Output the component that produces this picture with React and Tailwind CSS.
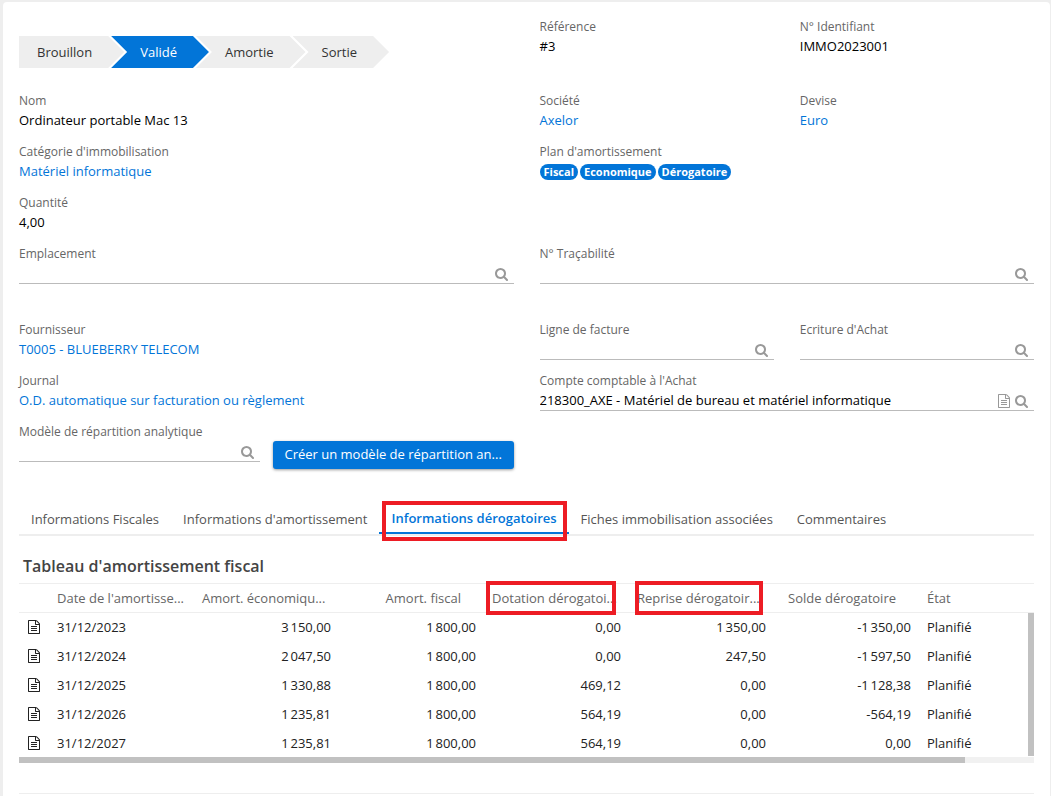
import React, { useState } from 'react';
import clsx from 'clsx';

const steps = ['Brouillon', 'Validé', 'Amortie', 'Sortie'];

const tabs = [
    'Informations Fiscales',
    "Informations d'amortissement",
    'Informations dérogatoires',
    'Fiches immobilisation associées',
    'Commentaires'
];

const columns = [
    { label: "Date de l'amortisse..." },
    { label: 'Amort. économiqu...' },
    { label: 'Amort. fiscal', right: true },
    { label: 'Dotation dérogatoi...', mark: 'left-[2px] right-[13px]' },
    { label: 'Reprise dérogatoir...', mark: 'left-[6px] right-[11px]' },
    { label: 'Solde dérogatoire', right: true },
    { label: 'État' }
];

const rows = [
    ['31/12/2023', 3150, 1800, 0, 1350, -1350, 'Planifié'],
    ['31/12/2024', 2047.5, 1800, 0, 247.5, -1597.5, 'Planifié'],
    ['31/12/2025', 1330.88, 1800, 469.12, 0, -1128.38, 'Planifié'],
    ['31/12/2026', 1235.81, 1800, 564.19, 0, -564.19, 'Planifié'],
    ['31/12/2027', 1235.81, 1800, 564.19, 0, 0, 'Planifié']
];

const formatAmount = (value) => {
    const [int, dec] = value.toFixed(2).split('.');
    return `${int.replace(/\B(?=(\d{3})+$)/g, '\u202f')},${dec}`;
};

function SearchIcon() {
    return (
        <svg viewBox="0 0 1792 1792" className="size-3.5 fill-current" aria-hidden="true">
            <path d="M1152 832q0-185-131.5-316.5t-316.5-131.5-316.5 131.5-131.5 316.5 131.5 316.5 316.5 131.5 316.5-131.5 131.5-316.5zm512 832q0 52-38 90t-90 38q-54 0-90-38l-343-342q-179 124-399 124-143 0-273.5-55.5t-225-150-150-225-55.5-273.5 55.5-273.5 150-225 225-150 273.5-55.5 273.5 55.5 225 150 150 225 55.5 273.5q0 220-124 399l343 343q37 37 37 90z" />
        </svg>
    );
}

function FileIcon() {
    return (
        <svg viewBox="0 0 1792 1792" className="size-3.5 fill-current" aria-hidden="true">
            <path d="M1596 380q28 28 48 76t20 88v1152q0 40-28 68t-68 28h-1344q-40 0-68-28t-28-68v-1600q0-40 28-68t68-28h896q40 0 88 20t76 48zm-444-244v376h376q-10-29-22-41l-313-313q-12-12-41-22zm384 1528v-1024h-416q-40 0-68-28t-28-68v-416h-768v1536h1280zm-1024-864q0-14 9-23t23-9h704q14 0 23 9t9 23v64q0 14-9 23t-23 9h-704q-14 0-23-9t-9-23v-64zm736 224q14 0 23 9t9 23v64q0 14-9 23t-23 9h-704q-14 0-23-9t-9-23v-64q0-14 9-23t23-9h704zm0 256q14 0 23 9t9 23v64q0 14-9 23t-23 9h-704q-14 0-23-9t-9-23v-64q0-14 9-23t23-9h704z" />
        </svg>
    );
}

function Field({ label, className, children }) {
    return (
        <div className={className}>
            <div className="h-5 text-xs leading-[22px] text-[#666]">{label}</div>
            <div className="h-[21px] leading-[21px] text-black">{children}</div>
        </div>
    );
}

function LinkField({ label, value, className }) {
    return (
        <Field label={label} className={className}>
            <a href="#" className="text-[#0275d8] hover:underline">{value}</a>
        </Field>
    );
}

function LookupField({ id, label, value = '', className }) {
    return (
        <div className={className}>
            <label htmlFor={id} className="block h-5 text-xs leading-[22px] text-[#666]">{label}</label>
            <div className="flex h-[21px] items-end border-b border-[#bbb] pr-[5px] text-[#999]">
                <input
                    id={id}
                    type="text"
                    defaultValue={value}
                    className="h-5 min-w-0 flex-1 bg-transparent text-black outline-none"
                />
                {value && (
                    <button type="button" aria-label="Ouvrir" className="mr-1 pb-0.5">
                        <FileIcon />
                    </button>
                )}
                <button type="button" aria-label="Rechercher" className="pb-0.5">
                    <SearchIcon />
                </button>
            </div>
        </div>
    );
}

function StatusSteps({ current }) {
    return (
        <div className="flex pt-5">
            {steps.map((step, i) => (
                <button
                    key={step}
                    type="button"
                    className={clsx(
                        'h-8 pr-8',
                        i === 0
                            ? 'pl-[18px] [clip-path:polygon(0_0,calc(100%-16px)_0,100%_50%,calc(100%-16px)_100%,0_100%)]'
                            : '-ml-[13px] pl-[29px] [clip-path:polygon(0_0,calc(100%-16px)_0,100%_50%,calc(100%-16px)_100%,0_100%,16px_50%)]',
                        step === current ? 'bg-[#0275d8] text-white' : 'bg-[#eee] text-[#333]'
                    )}
                >
                    {step}
                </button>
            ))}
        </div>
    );
}

function Tabs({ active, onChange }) {
    return (
        <div role="tablist" className="mt-8 flex border-b-2 border-[#eee] pt-[3px]">
            {tabs.map((tab) => (
                <button
                    key={tab}
                    type="button"
                    role="tab"
                    aria-selected={tab === active}
                    onClick={() => onChange(tab)}
                    className={clsx(
                        'relative h-[30px] px-3 whitespace-nowrap',
                        tab === active ? 'border-b-2 border-[#0275d8] font-semibold text-[#0275d8]' : 'text-[#555]'
                    )}
                >
                    {tab}
                    {tab === 'Informations dérogatoires' && (
                        <span className="pointer-events-none absolute -top-[3px] -bottom-[9px] left-[3px] right-0.5 border-4 border-[#ed1c24]" />
                    )}
                </button>
            ))}
        </div>
    );
}

function DepreciationTable() {
    return (
        <div>
            <h2 className="px-1 pt-[18px] pb-[5px] text-base leading-6 font-semibold text-[#444]">
                Tableau d'amortissement fiscal
            </h2>
            <div className="relative border-t border-[#eee]">
                <table className="w-full table-fixed">
                    <colgroup>
                        <col className="w-[30px]" />
                        {columns.map(({ label }) => (
                            <col key={label} className={label === 'État' ? '' : 'w-[145px]'} />
                        ))}
                    </colgroup>
                    <thead>
                        <tr className="h-7 border-b border-[#eee] text-[#666]">
                            <th />
                            {columns.map(({ label, right, mark }) => (
                                <th key={label} className="relative p-0 px-2 text-left font-normal whitespace-nowrap">
                                    <div className={clsx(right && 'pr-[15px] text-right')}>{label}</div>
                                    {mark && (
                                        <span className={clsx('pointer-events-none absolute -top-[3px] -bottom-[3px] border-4 border-[#ed1c24]', mark)} />
                                    )}
                                </th>
                            ))}
                        </tr>
                    </thead>
                    <tbody className="text-[#222]">
                        {rows.map((row) => (
                            <tr key={row[0]} className="h-[29px]">
                                <td className="p-0 pl-2">
                                    <button type="button" aria-label="Ouvrir la ligne" className="block">
                                        <FileIcon />
                                    </button>
                                </td>
                                {row.map((cell, i) => (
                                    <td key={i} className={clsx('p-0 px-2', typeof cell === 'number' && 'text-right')}>
                                        {typeof cell === 'number' ? formatAmount(cell) : cell}
                                    </td>
                                ))}
                            </tr>
                        ))}
                    </tbody>
                </table>
                {/* Vertical scroll thumb, runs beside the rows only */}
                <div className="absolute top-[29px] right-0 bottom-px w-1.5 bg-[#c1c1c1]" />
            </div>
            <div className="h-1.5 bg-[#f1f1f1]">
                <div className="h-full w-[93.2%] bg-[#c1c1c1]" />
            </div>
        </div>
    );
}

function App() {
    const [activeTab, setActiveTab] = useState('Informations dérogatoires');

    return (
        <div className="min-h-screen bg-[#eee] pt-0.5 pr-px pl-[3px] font-['Open_Sans',sans-serif] text-[13px] leading-5">
            <main className="rounded-t bg-white px-4 pt-3.5 pb-0.5">
                <div className="grid grid-cols-4 gap-x-[26px]">
                    <div className="col-span-2">
                        <StatusSteps current="Validé" />
                    </div>
                    <Field label="Référence">#3</Field>
                    <Field label="N° Identifiant">IMMO2023001</Field>
                </div>

                <div className="mt-[22px] grid grid-cols-4 gap-x-[26px] gap-y-2.5">
                    <Field label="Nom" className="col-span-2">Ordinateur portable Mac 13</Field>
                    <LinkField label="Société" value="Axelor" />
                    <LinkField label="Devise" value="Euro" />

                    <LinkField label="Catégorie d'immobilisation" value="Matériel informatique" className="col-span-2" />
                    <Field label="Plan d'amortissement" className="col-span-2">
                        <div className="flex h-full items-center gap-0.5">
                            {['Fiscal', 'Economique', 'Dérogatoire'].map((plan) => (
                                <span key={plan} className="rounded-full bg-[#0275d8] px-1 text-[11px] leading-4 font-bold text-white">
                                    {plan}
                                </span>
                            ))}
                        </div>
                    </Field>

                    <Field label="Quantité" className="col-span-4">4,00</Field>

                    <LookupField id="emplacement" label="Emplacement" className="col-span-2" />
                    <LookupField id="tracabilite" label="N° Traçabilité" className="col-span-2" />
                </div>

                <div className="mt-[35px] grid grid-cols-4 gap-x-[26px] gap-y-2.5">
                    <LinkField label="Fournisseur" value="T0005 - BLUEBERRY TELECOM" className="col-span-2" />
                    <LookupField id="ligne-facture" label="Ligne de facture" />
                    <LookupField id="ecriture-achat" label="Ecriture d'Achat" />

                    <LinkField label="Journal" value="O.D. automatique sur facturation ou règlement" className="col-span-2" />
                    <LookupField
                        id="compte-achat"
                        label="Compte comptable à l'Achat"
                        value="218300_AXE - Matériel de bureau et matériel informatique"
                        className="col-span-2"
                    />

                    <div className="col-span-2 grid grid-cols-2 gap-x-[13px]">
                        <LookupField id="modele-analytique" label="Modèle de répartition analytique" />
                        <div className="pt-5">
                            <button
                                type="button"
                                className="block h-7 w-full rounded-[3px] bg-[#0275d8] px-2.5 pb-0.5 whitespace-nowrap text-white shadow-[0_1px_3px_rgba(0,0,0,0.4)]"
                            >
                                Créer un modèle de répartition an...
                            </button>
                        </div>
                    </div>
                </div>

                <Tabs active={activeTab} onChange={setActiveTab} />
                <DepreciationTable />
                <hr className="mt-[30px] border-[#eee]" />
            </main>
        </div>
    );
}

export default App;
